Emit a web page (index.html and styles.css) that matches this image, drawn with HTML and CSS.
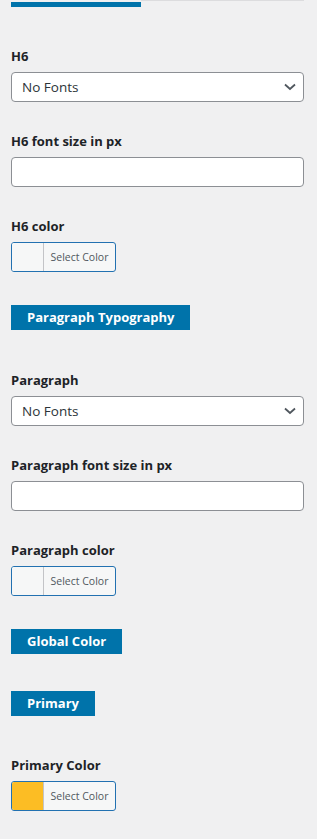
FILE: index.html
```html
<!DOCTYPE html>
<html>
<head>
<meta charset="utf-8">
<link rel="stylesheet" href="styles.css">
</head>
<body>
<div class="panel">
  <div class="tabline"><div class="tabbar"></div><div class="tabrest"></div></div>

  <div class="field first">
    <div class="label">H6</div>
    <div class="select"><span>No Fonts</span>
      <svg class="chev" width="12" height="8" viewBox="0 0 12 8"><path d="M1 1.5 L6 6 L11 1.5" fill="none" stroke="#50575e" stroke-width="1.8"/></svg>
    </div>
  </div>
  <div class="field">
    <div class="label">H6 font size in px</div>
    <div class="input"></div>
  </div>
  <div class="field">
    <div class="label">H6 color</div>
    <div class="colorbtn"><span class="swatch"></span><span class="ctext">Select Color</span></div>
  </div>

  <div class="heading">Paragraph Typography</div>

  <div class="field after-heading">
    <div class="label">Paragraph</div>
    <div class="select"><span>No Fonts</span>
      <svg class="chev" width="12" height="8" viewBox="0 0 12 8"><path d="M1 1.5 L6 6 L11 1.5" fill="none" stroke="#50575e" stroke-width="1.8"/></svg>
    </div>
  </div>
  <div class="field">
    <div class="label">Paragraph font size in px</div>
    <div class="input"></div>
  </div>
  <div class="field">
    <div class="label">Paragraph color</div>
    <div class="colorbtn"><span class="swatch"></span><span class="ctext">Select Color</span></div>
  </div>

  <div class="heading">Global Color</div>
  <div class="heading sub">Primary</div>

  <div class="field after-sub">
    <div class="label">Primary Color</div>
    <div class="colorbtn"><span class="swatch yellow"></span><span class="ctext">Select Color</span></div>
  </div>
</div>
</body>
</html>
```

FILE: styles.css
```css
html, body {
  margin: 0;
  padding: 0;
  background: #f0f0f1;
}
body {
  font-family: "Open Sans", sans-serif;
  color: #1d2327;
  font-size: 14px;
}
.panel {
  padding: 0 13px 0 11px;
  display: flex;
  flex-direction: column;
  align-items: flex-start;
}
.tabline {
  display: flex;
  width: 100%;
  height: 7px;
}
.tabbar {
  width: 130px;
  height: 5px;
  margin-top: 2px;
  background: #0073aa;
}
.tabrest {
  flex: 1;
  height: 1px;
  background: #dcdcde;
}
.field {
  width: 100%;
  margin-top: 29px;
  display: flex;
  flex-direction: column;
  gap: 6px;
}
.field.first { margin-top: 39px; }
.field.after-heading { margin-top: 40px; }
.field.after-sub { margin-top: 39px; }
.label {
  font-weight: 700;
  font-size: 13px;
  line-height: 20px;
  height: 20px;
}
.select, .input {
  box-sizing: border-box;
  width: 293px;
  height: 30px;
  background: #fff;
  border: 1px solid #8c8f94;
  border-radius: 4px;
}
.select {
  display: flex;
  align-items: center;
  justify-content: space-between;
  padding: 0 7px 0 10px;
  font-size: 13.5px;
  color: #2c3338;
}
.colorbtn {
  box-sizing: border-box;
  width: 105px;
  height: 30px;
  display: flex;
  border: 1px solid #2271b1;
  border-radius: 3px;
  background: #f6f7f7;
  overflow: hidden;
}
.swatch {
  width: 31px;
  border-right: 1px solid #c3c4c7;
  background: #f6f7f7;
}
.swatch.yellow { background: #fcbd24; }
.ctext {
  flex: 1;
  display: flex;
  align-items: center;
  justify-content: center;
  font-size: 10.5px;
  color: #50575e;
}
.heading {
  margin-top: 33px;
  background: #0073aa;
  color: #fff;
  font-weight: 700;
  font-size: 13px;
  line-height: 25px;
  height: 25px;
  padding: 0 16px;
}
.heading.sub { margin-top: 37px; padding: 0 16px 0 16px; }
```
